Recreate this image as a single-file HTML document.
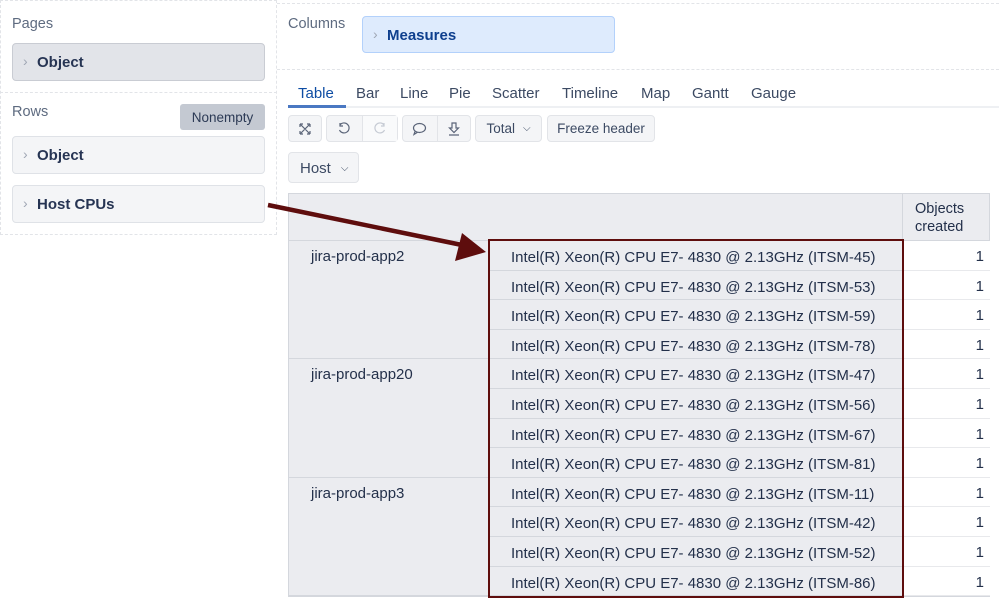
<!DOCTYPE html>
<html><head><meta charset="utf-8"><style>
*{box-sizing:border-box;margin:0;padding:0}
body{width:999px;height:602px;overflow:hidden;background:#fff;font-family:"Liberation Sans",sans-serif;color:#2c3a55;position:relative}
.a{position:absolute}
.lbl{font-size:14.5px;color:#5e6b80}
.chip{position:absolute;border:1px solid #dfe2e7;border-radius:4px;background:#f4f5f7;font-size:15px;font-weight:bold;color:#263453;padding-left:24px;display:flex;align-items:center}
.chip:before{content:"›";position:absolute;left:10px;top:50%;transform:translateY(-55%);color:#a0a7b4;font-weight:normal;font-size:14px}
.tab{position:absolute;top:85px;font-size:15px;color:#3c4a63}
.btn{position:absolute;top:115px;height:27px;border:1px solid #e2e4e8;border-radius:4px;background:#f4f5f7;font-size:13.5px;color:#3c4a63;display:flex;align-items:center;justify-content:center}
.row{position:absolute;left:489px;width:414px;height:29.6px;border-bottom:1px solid #d4d7dd;background:#ebecf0;font-size:15px;color:#23304a;padding-left:22px;line-height:29px;padding-top:2px}
.val{position:absolute;left:903px;width:87px;height:29.6px;border-bottom:1px solid #e8e9ec;background:#fff;font-size:15px;text-align:right;padding-right:6px;line-height:29px;padding-top:1px;color:#23304a}
.host{position:absolute;left:289px;width:200px;font-size:15px;color:#23304a;padding-left:22px;padding-top:7px;border-bottom:1px solid #d4d7dd;background:#ebecf0}
.dash{position:absolute;border-color:#e2e4e8;border-style:dashed;border-width:0}
</style></head><body>
<div class="dash" style="left:0;top:0;width:277px;height:235px;border-width:1px"></div>
<div class="dash" style="left:0;top:92px;width:277px;border-top-width:1px"></div>
<div class="dash" style="left:277px;top:69px;width:722px;border-top-width:1px"></div>
<div class="dash" style="left:277px;top:3px;width:722px;border-top-width:1px"></div>

<div class="a lbl" style="left:12px;top:16px">Pages</div>
<div class="chip" style="left:12px;top:43px;width:253px;height:38px;background:#e2e4e9;border-color:#c9ccd3">Object</div>
<div class="a lbl" style="left:12px;top:104px">Rows</div>
<div class="a" style="left:180px;top:104px;width:85px;height:26px;background:#c4c9d2;border-radius:3px;font-size:13.5px;color:#2c3a55;display:flex;align-items:center;justify-content:center">Nonempty</div>
<div class="chip" style="left:12px;top:136px;width:253px;height:38px">Object</div>
<div class="chip" style="left:12px;top:185px;width:253px;height:38px">Host CPUs</div>

<div class="a lbl" style="left:288px;top:16px">Columns</div>
<div class="chip" style="left:362px;top:16px;width:253px;height:37px;background:#deebfd;border-color:#b3d1fb;color:#0e3f8e;padding-top:2px">Measures</div>

<div class="a" style="left:288px;top:106px;width:711px;height:2px;background:#eef0f3"></div>
<div class="a" style="left:288px;top:105px;width:58px;height:3px;background:#4a78c2"></div>
<div class="tab" style="left:298px;color:#0e4da4">Table</div>
<div class="tab" style="left:356px">Bar</div>
<div class="tab" style="left:400px">Line</div>
<div class="tab" style="left:449px">Pie</div>
<div class="tab" style="left:492px">Scatter</div>
<div class="tab" style="left:562px">Timeline</div>
<div class="tab" style="left:641px">Map</div>
<div class="tab" style="left:692px">Gantt</div>
<div class="tab" style="left:751px">Gauge</div>

<div class="btn" style="left:288px;width:34px"><svg width="14" height="14" viewBox="0 0 14 14" fill="none" stroke="#5a6478" stroke-width="1.2"><path d="M2 2l10 10M12 2L2 12M2 2h3M2 2v3M12 2h-3M12 2v3M2 12h3M2 12v-3M12 12h-3M12 12v-3"/></svg></div>
<div class="btn" style="left:326px;width:72px;justify-content:flex-start"><div style="width:36px;height:100%;display:flex;align-items:center;justify-content:center;border-right:1px solid #e2e4e8"><svg width="14" height="14" viewBox="0 0 14 14" fill="none" stroke="#5a6478" stroke-width="1.2"><path d="M3 3a5 5 0 1 1-0.5 5M3 1v3h3"/></svg></div><div style="width:35px;height:100%;display:flex;align-items:center;justify-content:center;background:#f9fafb"><svg width="14" height="14" viewBox="0 0 14 14" fill="none" stroke="#c5cad3" stroke-width="1.2"><path d="M11 3a5 5 0 1 0 0.5 5M11 1v3h-3"/></svg></div></div>
<div class="btn" style="left:402px;width:69px;justify-content:flex-start"><div style="width:35px;height:100%;display:flex;align-items:center;justify-content:center;border-right:1px solid #e2e4e8"><svg width="15" height="14" viewBox="0 0 15 14" fill="none" stroke="#5a6478" stroke-width="1.2"><ellipse cx="7.5" cy="6" rx="6" ry="4.5"/><path d="M3 9.5L2 12.5 5.5 10.3"/></svg></div><div style="width:33px;height:100%;display:flex;align-items:center;justify-content:center"><svg width="14" height="14" viewBox="0 0 14 14" fill="none" stroke="#5a6478" stroke-width="1.2"><path d="M5 1h4v5h2.5L7 10.5 2.5 6H5zM2 13h10"/></svg></div></div>
<div class="btn" style="left:475px;width:67px">Total <span style="font-size:10px;margin-left:8px">&#x2335;</span></div>
<div class="btn" style="left:547px;width:108px">Freeze header</div>

<div class="a" style="left:288px;top:152px;width:71px;height:31px;border:1px solid #e2e4e8;border-radius:4px;background:#f4f5f7;font-size:15px;color:#3c4a63;display:flex;align-items:center;padding-left:11px;padding-top:2px">Host <span style="font-size:10px;margin-left:10px">&#x2335;</span></div>

<div class="a" style="left:288px;top:193px;width:702px;height:404px;border:1px solid #d4d7dd;background:#ebecf0"></div>
<div class="a" style="left:289px;top:240px;width:700px;height:1px;background:#d4d7dd"></div>
<div class="a" style="left:902px;top:193px;width:1px;height:48px;background:#d4d7dd"></div>
<div class="a" style="left:915px;top:200px;font-size:14.5px;line-height:18px;color:#23304a">Objects<br>created</div>

<div class="host" style="top:241px;height:118.4px">jira-prod-app2</div>
<div class="host" style="top:359.4px;height:118.4px">jira-prod-app20</div>
<div class="host" style="top:477.8px;height:118.4px">jira-prod-app3</div>

<div class="row" style="top:241px">Intel(R) Xeon(R) CPU E7- 4830 @ 2.13GHz (ITSM-45)</div>
<div class="row" style="top:270.6px">Intel(R) Xeon(R) CPU E7- 4830 @ 2.13GHz (ITSM-53)</div>
<div class="row" style="top:300.2px">Intel(R) Xeon(R) CPU E7- 4830 @ 2.13GHz (ITSM-59)</div>
<div class="row" style="top:329.8px">Intel(R) Xeon(R) CPU E7- 4830 @ 2.13GHz (ITSM-78)</div>
<div class="row" style="top:359.4px">Intel(R) Xeon(R) CPU E7- 4830 @ 2.13GHz (ITSM-47)</div>
<div class="row" style="top:389px">Intel(R) Xeon(R) CPU E7- 4830 @ 2.13GHz (ITSM-56)</div>
<div class="row" style="top:418.6px">Intel(R) Xeon(R) CPU E7- 4830 @ 2.13GHz (ITSM-67)</div>
<div class="row" style="top:448.2px">Intel(R) Xeon(R) CPU E7- 4830 @ 2.13GHz (ITSM-81)</div>
<div class="row" style="top:477.8px">Intel(R) Xeon(R) CPU E7- 4830 @ 2.13GHz (ITSM-11)</div>
<div class="row" style="top:507.4px">Intel(R) Xeon(R) CPU E7- 4830 @ 2.13GHz (ITSM-42)</div>
<div class="row" style="top:537px">Intel(R) Xeon(R) CPU E7- 4830 @ 2.13GHz (ITSM-52)</div>
<div class="row" style="top:566.6px">Intel(R) Xeon(R) CPU E7- 4830 @ 2.13GHz (ITSM-86)</div>

<div class="val" style="top:241px">1</div><div class="val" style="top:270.6px">1</div><div class="val" style="top:300.2px">1</div><div class="val" style="top:329.8px">1</div><div class="val" style="top:359.4px">1</div><div class="val" style="top:389px">1</div><div class="val" style="top:418.6px">1</div><div class="val" style="top:448.2px">1</div><div class="val" style="top:477.8px">1</div><div class="val" style="top:507.4px">1</div><div class="val" style="top:537px">1</div><div class="val" style="top:566.6px">1</div>

<div class="a" style="left:488px;top:239px;width:416px;height:359px;border:2px solid #5e0d0d"></div>

<svg class="a" style="left:0;top:0" width="999" height="602"><path d="M268 205L462 245" stroke="#5e0d0d" stroke-width="4.5" fill="none"/><path d="M486 252L455 261L462 233Z" fill="#5e0d0d"/></svg>
</body></html>
